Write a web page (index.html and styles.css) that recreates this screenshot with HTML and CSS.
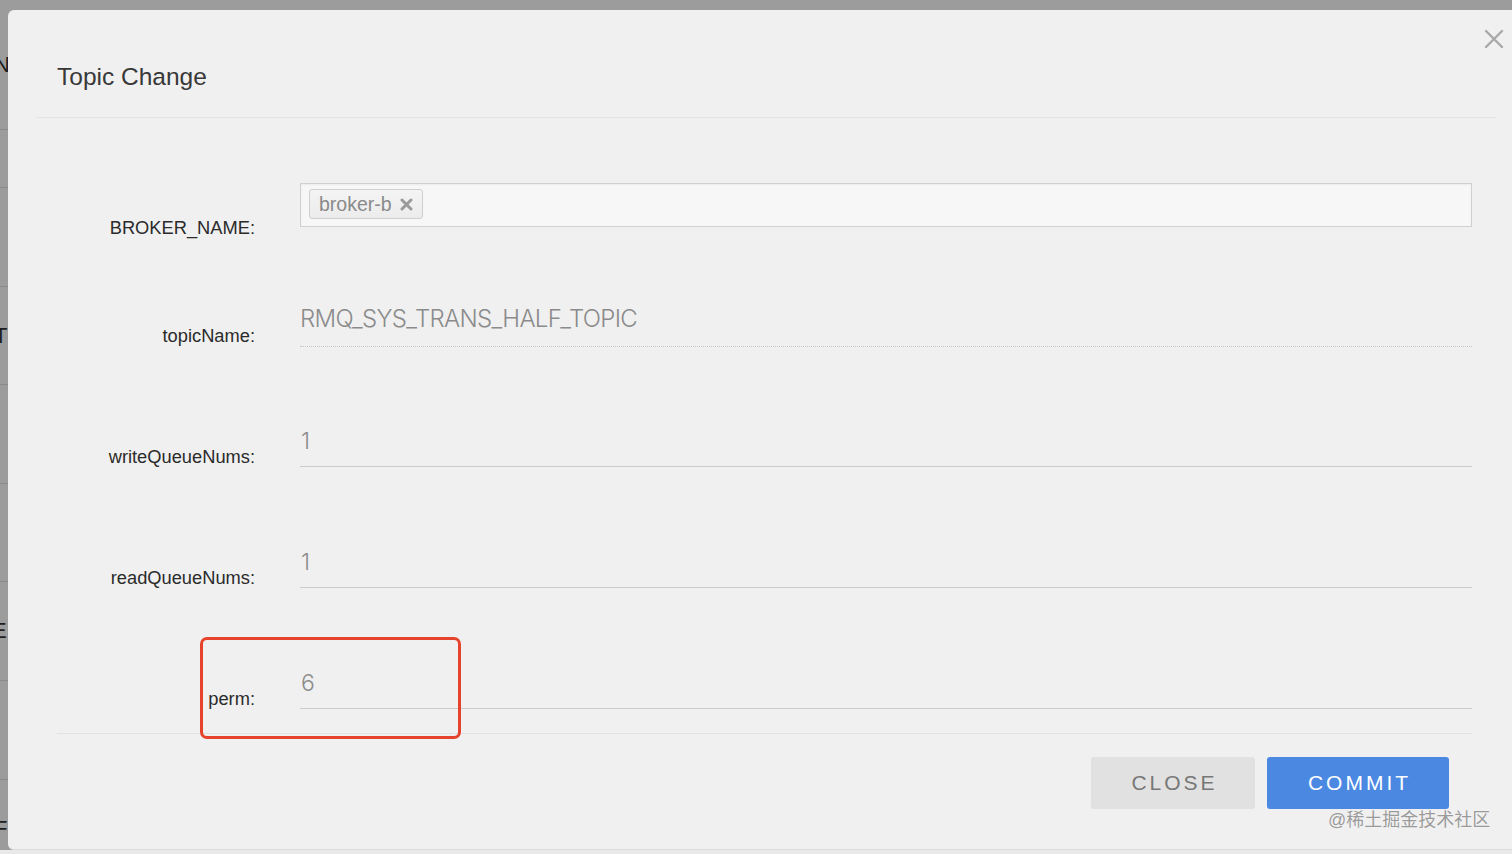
FILE: index.html
```html
<!DOCTYPE html>
<html lang="en">
<head>
<meta charset="utf-8">
<title>Topic Change</title>
<link rel="stylesheet" href="styles.css">
</head>
<body>
<div class="backdrop">
  <div class="bg-row r0"><span>N</span></div>
  <div class="bg-row r1"></div>
  <div class="bg-row r2"></div>
  <div class="bg-row r3"><span>T</span></div>
  <div class="bg-row r4"></div>
  <div class="bg-row r5"></div>
  <div class="bg-row r6"><span class="eq">E</span></div>
  <div class="bg-row r7"></div>
  <div class="bg-row r8"><span>F</span></div>
</div>

<div class="modal">
  <button class="modal-close" aria-label="close">
    <svg width="20" height="20" viewBox="0 0 20 20"><path d="M2 2 L18 18 M18 2 L2 18" stroke="#a9a9a9" stroke-width="2.4" stroke-linecap="round" fill="none"/></svg>
  </button>
  <div class="modal-header">
    <h4 class="modal-title">Topic Change</h4>
  </div>
  <div class="modal-body">
    <div class="form-row">
      <label class="form-label label-broker">BROKER_NAME:</label>
      <div class="tag-input">
        <span class="tag">broker-b
          <svg class="tag-x" width="13" height="13" viewBox="0 0 13 13"><path d="M2 2 L11 11 M11 2 L2 11" stroke="#9a9a9a" stroke-width="3" stroke-linecap="round" fill="none"/></svg>
        </span>
      </div>
    </div>
    <div class="form-row">
      <label class="form-label">topicName:</label>
      <div class="text-field static">RMQ_SYS_TRANS_HALF_TOPIC</div>
    </div>
    <div class="form-row">
      <label class="form-label">writeQueueNums:</label>
      <div class="text-field">1</div>
    </div>
    <div class="form-row">
      <label class="form-label">readQueueNums:</label>
      <div class="text-field">1</div>
    </div>
    <div class="form-row">
      <label class="form-label">perm:</label>
      <div class="text-field">6</div>
    </div>
  </div>
  <div class="modal-footer">
    <button class="btn btn-close">CLOSE</button>
    <button class="btn btn-commit">COMMIT</button>
  </div>
</div>

<div class="highlight"></div>
<div class="watermark">@稀土掘金技术社区</div>
</body>
</html>
```

FILE: styles.css
```css
* { box-sizing: border-box; }

html, body {
  margin: 0;
  padding: 0;
  width: 1512px;
  height: 854px;
  overflow: hidden;
}

body {
  background: #e9e9e9;
  font-family: "Liberation Sans", Arial, sans-serif;
  color: #333;
  position: relative;
}

/* page behind the dialog */
.backdrop {
  display: flex;
  flex-direction: column;
  width: 40px;
  height: 850px;
  background: #9c9c9c;
}
.bg-row {
  border-bottom: 1px solid #8a8a8a;
  display: flex;
  align-items: center;
  overflow: hidden;
}
.bg-row span {
  font-size: 22px;
  color: #1e1e1e;
  margin-left: -6px;
}
.bg-row span.eq { margin-left: -8px; }
.r0 { height: 130px; }
.r1 { height: 58px; }
.r2 { height: 99px; }
.r3 { height: 98px; }
.r4 { height: 99px; }
.r5 { height: 98px; }
.r6 { height: 99px; }
.r7 { height: 99px; }
.r8 { height: 70px; border-bottom: none; align-items: flex-end; padding-bottom: 8px; }

/* dialog */
.modal {
  position: absolute;
  left: 8px;
  top: 10px;
  width: 1516px;
  height: 840px;
  background: #f0f0f0;
  border-radius: 6px 0 0 6px;
  border-bottom: 1px solid #dcdcdc;
  box-shadow: 0 -10px 0 0 #9c9c9c;
}

.modal-close {
  position: absolute;
  top: 19px;
  right: 20px;
  border: 0;
  padding: 0;
  background: none;
  width: 20px;
  height: 20px;
  display: block;
}
.modal-close svg { display: block; }

.modal-header {
  margin: 0 28px;
  padding: 54px 21px 27px;
  border-bottom: 1px solid #e4e4e4;
}
.modal-title {
  margin: 0;
  font-size: 24.5px;
  line-height: 26px;
  font-weight: normal;
  color: #383838;
}

.modal-body {
  padding: 65px 52px 0 49px;
  display: flex;
  flex-direction: column;
  gap: 71px;
}

.form-row {
  display: flex;
  align-items: flex-end;
}

.form-label {
  flex: 0 0 198px;
  margin-right: 45px;
  text-align: right;
  font-size: 18.3px;
  line-height: 22px;
  color: #2b2b2b;
  margin-bottom: -1px;
}
.form-label.label-broker { margin-bottom: -12px; }

.tag-input {
  flex: 1;
  height: 44px;
  border: 1px solid #d0d0d0;
  background: #f7f7f7;
  box-shadow: inset 0 1px 2px rgba(0,0,0,0.05);
  padding: 5px 8px;
  display: flex;
  align-items: flex-start;
}
.tag {
  height: 30px;
  display: inline-flex;
  align-items: center;
  gap: 8px;
  padding: 0 9px;
  border: 1px solid #cfcfcf;
  border-radius: 3px;
  background: linear-gradient(#f4f4f4, #ececec);
  font-size: 19.5px;
  color: #8a8a8a;
}
.tag-x { display: block; }

.text-field {
  flex: 1;
  height: 50px;
  border-bottom: 1px solid #cbcbcb;
  font-family: Inter, "Liberation Sans", sans-serif;
  font-weight: 300;
  font-size: 23px;
  line-height: 48px;
  color: #8b8b8b;
  padding-left: 1px;
}
.text-field.static {
  height: 49px;
  font-size: 24px;
  line-height: 41px;
  border-bottom: 1px dotted #c4c4c4;
  letter-spacing: -0.7px;
  padding-left: 0;
  margin-bottom: -1px;
}

.modal-footer {
  margin: 24px 52px 0 49px;
  border-top: 1px solid #e2e2e2;
  padding: 23px 23px 0;
  display: flex;
  justify-content: flex-end;
  gap: 12px;
}

.btn {
  height: 52px;
  border: 0;
  border-radius: 3px;
  font-family: "Liberation Sans", Arial, sans-serif;
  font-size: 21px;
  letter-spacing: 3px;
  padding: 0 0 0 3px;
  cursor: pointer;
}
.btn-close {
  width: 164px;
  background: #e1e1e1;
  color: #777;
}
.btn-commit {
  width: 182px;
  background: #4a88e2;
  color: #fff;
}

/* annotation overlays */
.highlight {
  position: absolute;
  left: 200px;
  top: 637px;
  width: 261px;
  height: 102px;
  border: 3px solid #e5432c;
  border-radius: 7px;
}

.watermark {
  position: absolute;
  left: 1328px;
  top: 808px;
  font-family: "Liberation Sans", "Noto Sans CJK SC", sans-serif;
  font-size: 18px;
  line-height: 24px;
  color: #9a9a9a;
  text-shadow: 0 0 1px #fff;
}
```
